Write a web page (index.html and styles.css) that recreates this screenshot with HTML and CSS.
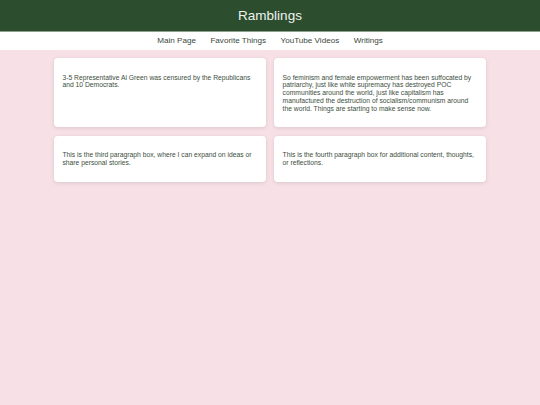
FILE: index.html
```html
<!DOCTYPE html>
<html>
<head>
<meta charset="utf-8">
<link rel="stylesheet" href="styles.css">
</head>
<body>
<header class="site-header">
  <h1 class="title">Ramblings</h1>
</header>
<nav class="site-nav">
  <a href="#">Main Page</a>
  <a href="#">Favorite Things</a>
  <a href="#">YouTube Videos</a>
  <a href="#">Writings</a>
</nav>
<main class="content">
  <div class="grid">
    <div class="card"><p>3-5 Representative Al Green was censured by the Republicans and 10 Democrats.</p></div>
    <div class="card"><p>So feminism and female empowerment has been suffocated by patriarchy, just like white supremacy has destroyed POC communities around the world, just like capitalism has manufactured the destruction of socialism/communism around the world. Things are starting to make sense now.</p></div>
    <div class="card"><p>This is the third paragraph box, where I can expand on ideas or share personal stories.</p></div>
    <div class="card"><p>This is the fourth paragraph box for additional content, thoughts, or reflections.</p></div>
  </div>
</main>
</body>
</html>
```
FILE: styles.css
```css
html, body {
  margin: 0;
  padding: 0;
}
body {
  font-family: "Liberation Sans", Arial, sans-serif;
  font-size: 6.75px;
  background: #f7e1e6;
  color: #3d4e40;
  min-height: 405px;
}
.site-header {
  background: #2c4d2e;
  padding: 8px 0;
  text-align: center;
  border-bottom: 1px solid #8f9f90;
}
.title {
  margin: 0;
  font-size: 13.5px;
  line-height: 15px;
  font-weight: normal;
  color: #eef3ee;
}
.site-nav {
  background: #ffffff;
  display: flex;
  justify-content: center;
  gap: 14.5px;
  padding: 4.3px 0;
}
.site-nav a {
  font-size: 8.1px;
  line-height: 9.4px;
  color: #3a473c;
  text-decoration: none;
}
.content {
  padding-top: 8.4px;
}
.grid {
  width: 80%;
  margin: 0 auto;
  display: grid;
  grid-template-columns: 1fr 1fr;
  gap: 8.4px;
}
.card {
  background: #ffffff;
  border-radius: 4px;
  padding: 8.4px;
  box-shadow: 0 1px 4px rgba(0, 0, 0, 0.12);
}
.card p {
  margin: 6.75px 0;
  line-height: 1.15;
}
```
